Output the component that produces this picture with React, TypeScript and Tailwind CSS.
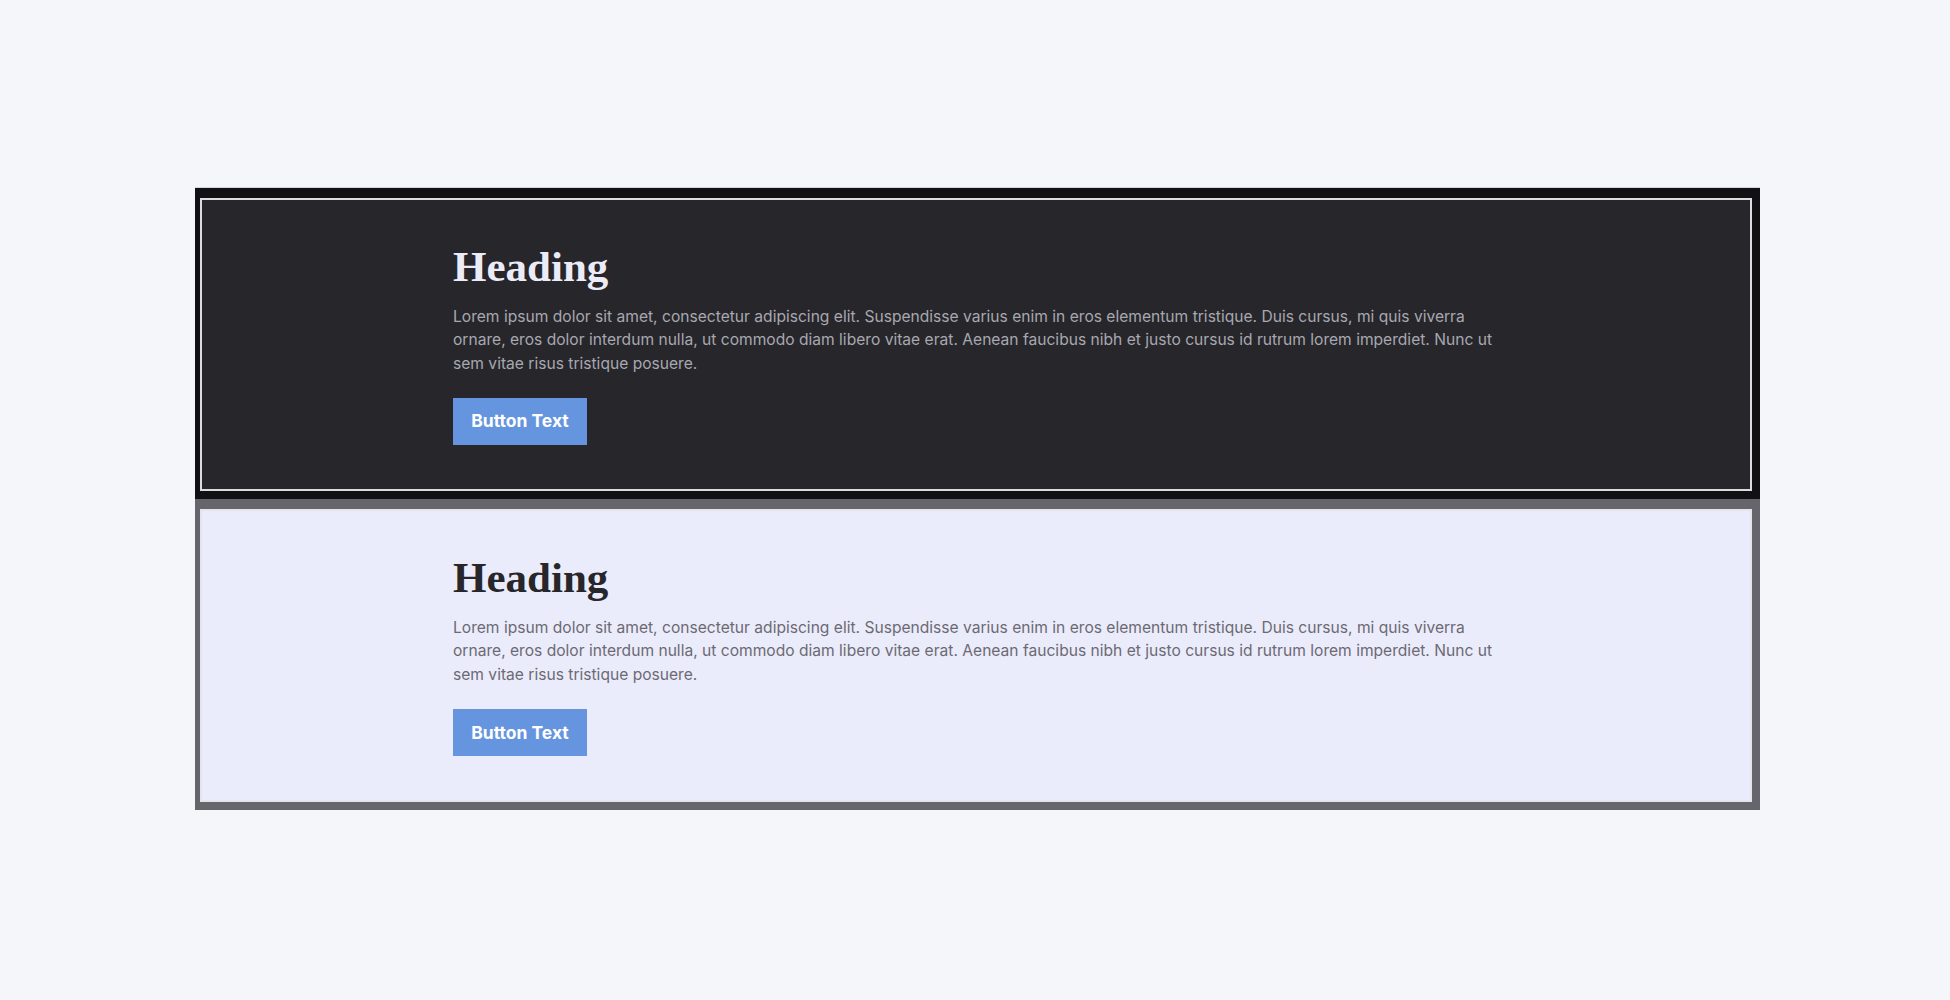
export default function App() {
  const sections = [
    {
      key: 'dark',
      outer: 'bg-[#111113]',
      inner: 'bg-[#27262b] border-2 border-[#dcdce0]',
      heading: 'text-[#ececf8]',
      body: 'text-[#a8a8b0]',
    },
    {
      key: 'light',
      outer: 'bg-[#66656b]',
      inner: 'bg-[#ebecfb] border-2 border-[#e4e4ec]',
      heading: 'text-[#27262b]',
      body: 'text-[#6b6a73]',
    },
  ];

  return (
    <div className="min-h-screen w-full bg-[#f5f6f9] pt-[187px]">
      <div className="ml-[195px] w-[1565px] border-t border-[#d6d6da]">
        {sections.map((s) => (
          <div key={s.key} className={`${s.outer} pt-[10px] pl-[5px] pr-[8px] pb-[8px]`}>
            <div className={`${s.inner} pt-[41px] pb-[44px]`}>
              <div className="ml-[251px] w-[1056px]">
                <h2
                  className={`${s.heading} text-[43px] font-bold leading-[1.2]`}
                  style={{ fontFamily: '"Liberation Serif", "DejaVu Serif", serif' }}
                >
                  Heading
                </h2>
                <p
                  className={`${s.body} mt-[12px] text-[15.6px] leading-[23.5px]`}
                  style={{ fontFamily: 'Inter, "Liberation Sans", sans-serif' }}
                >
                  Lorem ipsum dolor sit amet, consectetur adipiscing elit. Suspendisse varius enim in eros elementum tristique. Duis cursus, mi quis viverra ornare, eros dolor interdum nulla, ut commodo diam libero vitae erat. Aenean faucibus nibh et justo cursus id rutrum lorem imperdiet. Nunc ut sem vitae risus tristique posuere.
                </p>
                <button
                  className="mt-[23px] h-[47px] w-[134px] bg-[#6495de] text-[17.5px] font-bold text-white"
                  style={{ fontFamily: 'Inter, "Liberation Sans", sans-serif' }}
                >
                  Button Text
                </button>
              </div>
            </div>
          </div>
        ))}
      </div>
    </div>
  );
}
